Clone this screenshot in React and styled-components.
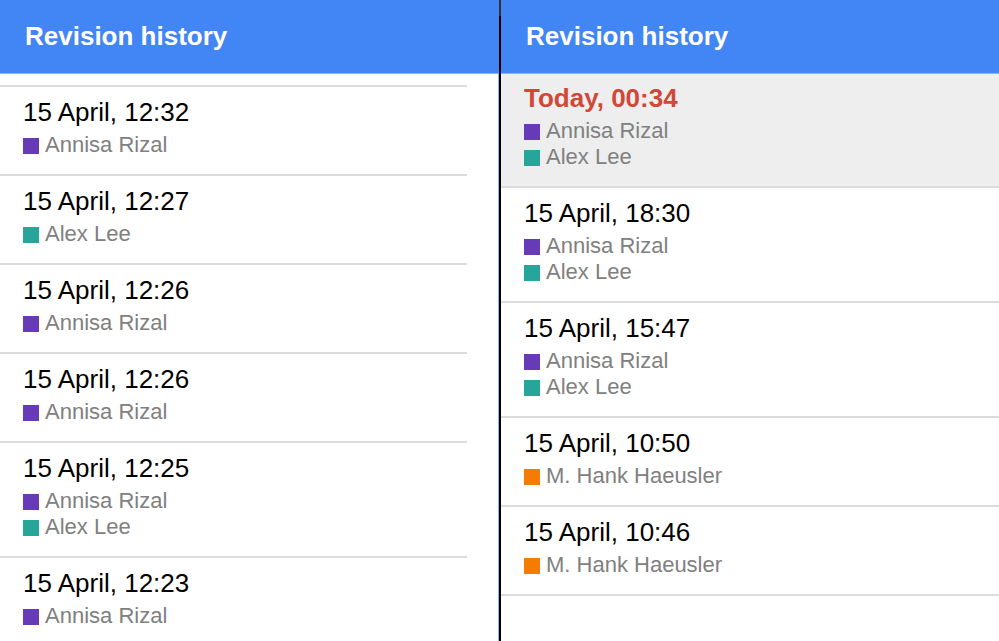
import React from "react";
import styled, { createGlobalStyle } from "styled-components";

const GlobalStyle = createGlobalStyle`
  *, *::before, *::after { box-sizing: border-box; }
  body {
    margin: 0;
    background: #fff;
    color: #000;
    font-family: "Liberation Sans", Arial, sans-serif;
  }
`;

const authors = {
  annisa: { name: "Annisa Rizal", color: "#673ab7" },
  alex: { name: "Alex Lee", color: "#26a69a" },
  hank: { name: "M. Hank Haeusler", color: "#f57c00" },
};

const earlierRevisions = [
  { time: "15 April, 12:32", by: ["annisa"] },
  { time: "15 April, 12:27", by: ["alex"] },
  { time: "15 April, 12:26", by: ["annisa"] },
  { time: "15 April, 12:26", by: ["annisa"] },
  { time: "15 April, 12:25", by: ["annisa", "alex"] },
  { time: "15 April, 12:23", by: ["annisa"] },
];

const latestRevisions = [
  { time: "Today, 00:34", by: ["annisa", "alex"], current: true },
  { time: "15 April, 18:30", by: ["annisa", "alex"] },
  { time: "15 April, 15:47", by: ["annisa", "alex"] },
  { time: "15 April, 10:50", by: ["hank"] },
  { time: "15 April, 10:46", by: ["hank"] },
];

const Page = styled.main`
  display: grid;
  grid-template-columns: 499fr 2px 498fr;
  height: 100vh;
  overflow: hidden;
`;

const Panel = styled.section`
  display: flex;
  flex-direction: column;
  min-width: 0;
  overflow: hidden;
`;

const Header = styled.header`
  position: relative;
  z-index: 1;
  flex: none;
  padding: 21px 25px 22px;
  background: #4285f4;
  box-shadow: 0 1px 0 #8db5f8;
`;

const Title = styled.h1`
  margin: 0;
  color: #fff;
  font-size: 26px;
  font-weight: 700;
  line-height: 30px;
`;

const Body = styled.div`
  flex: 1;
  min-height: 0;
  overflow: hidden;
  padding: ${(p) => (p.$scrolled ? "12px 31px 0 0" : "0")};
  border-right: ${(p) => (p.$scrolled ? "1px solid #8db5f8" : "none")};
`;

const RevisionList = styled.ul`
  margin: 0;
  padding: 0;
  list-style: none;
  border-top: ${(p) => (p.$scrolled ? "2px solid #dcdcdc" : "none")};
`;

const RevisionItem = styled.li`
  border-bottom: 2px solid #dcdcdc;
`;

const RevisionButton = styled.button`
  display: block;
  width: 100%;
  padding: 10px 23px 16px;
  border: 0;
  background: ${(p) => (p.$current ? "#eeeeee" : "#fff")};
  color: ${(p) => (p.$current ? "#d14836" : "#000")};
  font-family: inherit;
  text-align: left;
  cursor: pointer;
`;

const Timestamp = styled.span`
  display: block;
  margin-bottom: 5px;
  font-size: 26px;
  font-weight: ${(p) => (p.$current ? 700 : 400)};
  line-height: 30px;
`;

const Author = styled.span`
  display: flex;
  align-items: flex-end;
  gap: 6px;
  color: #808080;
  font-size: 22px;
  line-height: 26px;
`;

const Swatch = styled.span`
  flex: none;
  width: 16px;
  height: 16px;
  margin-bottom: 4px;
  background: ${(p) => p.$color};
`;

const Divider = styled.div`
  background: linear-gradient(#303030 16px, #000 16px);
`;

function HistoryPanel({ revisions, scrolled }) {
  return (
    <Panel>
      <Header>
        <Title>Revision history</Title>
      </Header>
      <Body $scrolled={scrolled}>
        <RevisionList $scrolled={scrolled}>
          {revisions.map((revision, index) => (
            <RevisionItem key={index}>
              <RevisionButton type="button" $current={revision.current}>
                <Timestamp $current={revision.current}>{revision.time}</Timestamp>
                {revision.by.map((id) => (
                  <Author key={id}>
                    <Swatch $color={authors[id].color} />
                    {authors[id].name}
                  </Author>
                ))}
              </RevisionButton>
            </RevisionItem>
          ))}
        </RevisionList>
      </Body>
    </Panel>
  );
}

export default function App() {
  return (
    <>
      <GlobalStyle />
      <Page>
        <HistoryPanel revisions={earlierRevisions} scrolled />
        <Divider />
        <HistoryPanel revisions={latestRevisions} />
      </Page>
    </>
  );
}
